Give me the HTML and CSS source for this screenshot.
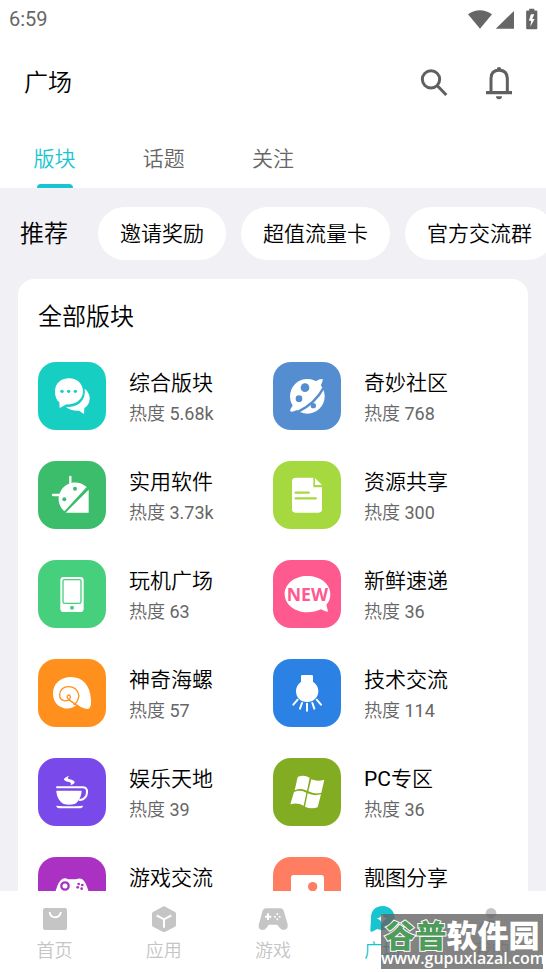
FILE: index.html
```html
<!DOCTYPE html>
<html lang="zh-CN">
<head>
<meta charset="utf-8">
<meta name="viewport" content="width=device-width, initial-scale=1">
<title>广场</title>
<link rel="stylesheet" href="styles.css">
</head>
<body>
<div class="app">
  <header class="top">
    <div class="status">
      <span>6:59</span>
      <svg class="status-icons" viewBox="173 20 207 64" aria-hidden="true">
        <path d="M173 38Q208 14 244 38L208.500 81Z"/>
        <path d="M309 28V81H255Z"/>
        <path fill-rule="evenodd" d="M345 30Q345 27 348 27H354V22H369V27H375Q378 27 378 30V79Q378 82 375 82H348Q345 82 345 79ZM359 38L353 57H360L357 75L370 52H363L369 38Z"/>
      </svg>
    </div>
    <div class="bar">
      <h1>广场</h1>
      <div class="actions">
        <button type="button" aria-label="搜索">
          <svg viewBox="24 197 96 96"><circle cx="63" cy="234" r="26" class="line"/><path d="M82 253L109 281" class="line"/></svg>
        </button>
        <button type="button" aria-label="通知">
          <svg viewBox="219 197 96 96"><path class="line" d="M243 273V231Q243 207 267 207T292 231V273"/><path d="M228 269H306V279H228ZM258 285H276Q276 294 267 294T258 285ZM260 208V204Q261 197 267 197T274 204V208Z"/></svg>
        </button>
      </div>
    </div>
    <nav class="tabs">
      <a class="active" href="#boards">版块</a>
      <a href="#topics">话题</a>
      <a href="#follow">关注</a>
    </nav>
  </header>

  <main class="content">
    <section class="recommend">
      <h2>推荐</h2>
      <a class="chip" href="#invite">邀请奖励</a>
      <a class="chip" href="#card">超值流量卡</a>
      <a class="chip" href="#group">官方交流群</a>
    </section>

    <section class="card" id="boards">
      <h2>全部版块</h2>
      <div class="grid">
        <a class="board" href="#b1">
          <svg class="tile teal" viewBox="24 22 204 204">
            <path d="M164 102C184 117 185 146 163 161L162 178L147 168C132 169 117 165 107 156C143 161 169 137 164 102Z"/>
            <path d="M117 71C142 71 159 88 159 110C159 134 138 151 110 149L89 160L88 143C79 136 75 124 75 111C75 87 92 71 117 71Z"/>
            <g class="cut"><circle cx="96" cy="110" r="5"/><circle cx="116" cy="110" r="5"/><circle cx="136" cy="110" r="5"/></g>
          </svg>
          <div class="info"><h3>综合版块</h3><p>热度 5.68k</p></div>
        </a>
        <a class="board" href="#b2">
          <svg class="tile blue" viewBox="24 22 204 204">
            <circle cx="127" cy="125" r="52"/>
            <path d="M152 80Q168 71 173 74Q175 78 164 99Q138 143 96 166Q80 174 76 170Q73 166 85 150Z"/>
            <path class="cut-line" d="M176 99Q151 146 100 171"/>
            <g class="cut"><circle cx="120" cy="99" r="13"/><circle cx="102" cy="132" r="10"/><circle cx="145" cy="153" r="8"/></g>
          </svg>
          <div class="info"><h3>奇妙社区</h3><p>热度 768</p></div>
        </a>
        <a class="board" href="#b3">
          <svg class="tile green" viewBox="24 319 204 204">
            <path d="M103 470C83 451 80 425 96 403C114 380 146 377 170 397ZM176 405V474H107Z"/>
            <path class="ink" d="M121 367V388M69 421H88"/>
            <g class="cut"><circle cx="135" cy="402" r="6"/><circle cx="103" cy="434" r="6"/></g>
          </svg>
          <div class="info"><h3>实用软件</h3><p>热度 3.73k</p></div>
        </a>
        <a class="board" href="#b4">
          <svg class="tile lime" viewBox="24 319 204 204">
            <path d="M92 369H145V398H171V464Q171 474 161 474H91Q81 474 81 464V380Q81 369 92 369ZM150 370L171 391H150Z"/>
            <path class="cut-line" d="M92 414H131M92 431H152"/>
          </svg>
          <div class="info"><h3>资源共享</h3><p>热度 300</p></div>
        </a>
        <a class="board" href="#b5">
          <svg class="tile mint" viewBox="24 30 204 204">
            <rect x="91" y="81" width="70" height="105" rx="10"/>
            <rect class="cut-line thin" x="99" y="89" width="54" height="71" rx="5"/><circle class="cut" cx="126" cy="173" r="6"/>
          </svg>
          <div class="info"><h3>玩机广场</h3><p>热度 63</p></div>
        </a>
        <a class="board" href="#b6">
          <svg class="tile pink" viewBox="24 30 204 204">
            <path d="M127 78C166 78 196 102 196 132C196 145 192 156 184 164L189 184Q187 188 168 178C155 184 143 187 127 187C88 187 59 162 59 132C59 102 88 78 127 78Z"/>
            <text class="new" x="127" y="153" text-anchor="middle">NEW</text>
          </svg>
          <div class="info"><h3>新鲜速递</h3><p>热度 36</p></div>
        </a>
        <a class="board" href="#b7">
          <svg class="tile orange" viewBox="24 327 204 204">
            <path d="M69 430C69 402 91 381 123 381C159 381 180 406 183 449Q185 475 173 477Q163 477 140 465C126 476 112 478 98 473C80 468 69 452 69 430Z"/>
            <path class="cut-line thin" d="M147 470L116 449Q107 438 115 435Q121 434 121 442C119 457 89 457 89 435C89 419 101 410 115 410C137 410 152 429 144 448Q141 459 132 464"/>
          </svg>
          <div class="info"><h3>神奇海螺</h3><p>热度 57</p></div>
        </a>
        <a class="board" href="#b8">
          <svg class="tile azure" viewBox="24 327 204 204">
            <path d="M112 375H140Q144 375 144 379V395C154 402 160 411 160 423C160 442 146 456 126 456S93 442 93 423C93 411 99 402 108 395V379Q108 375 112 375Z"/>
            <path class="ink thin" d="M98 449L85 464M111 459L105 476M126 461V482M142 459L148 476M155 449L168 464"/>
          </svg>
          <div class="info"><h3>技术交流</h3><p>热度 114</p></div>
        </a>
        <a class="board" href="#b9">
          <svg class="tile violet" viewBox="24 22 204 204">
            <path d="M79 120H155C154 140 145 154 134 160Q117 164 101 160C88 152 80 139 79 120ZM79 165Q119 169 159 165Q159 173 145 173H93Q79 173 79 165Z"/>
            <path class="ink thin" d="M81 110H155Q172 108 171 125Q170 145 150 148"/>
            <path d="M118 75Q104 80 102 85Q101 91 117 94Q126 97 121 104Q135 99 134 94Q133 89 119 86Q108 83 118 75Z"/>
          </svg>
          <div class="info"><h3>娱乐天地</h3><p>热度 39</p></div>
        </a>
        <a class="board" href="#b10">
          <svg class="tile olive" viewBox="24 22 204 204">
            <path d="M98 79Q116 71 134 81L126 120Q109 111 89 119ZM139 86Q157 94 178 87L169 126Q149 132 130 122ZM87 124Q107 116 124 126L116 165Q98 154 76 161ZM128 128Q147 137 168 131L158 170Q138 177 120 168Z"/>
          </svg>
          <div class="info"><h3>PC专区</h3><p>热度 36</p></div>
        </a>
        <a class="board" href="#b11">
          <svg class="tile purple" viewBox="24 319 204 204">
            <path d="M98 384Q107 381 114 386H138Q149 381 157 386Q169 393 181 441Q188 466 176 470Q163 473 149 447H105Q92 473 80 470Q66 466 73 436Q83 391 98 384Z"/>
            <circle class="cut-line" cx="105" cy="406" r="11"/>
            <g class="cut"><circle cx="146" cy="400" r="4"/><circle cx="157" cy="403" r="4"/><circle cx="143" cy="410" r="4"/><circle cx="155" cy="414" r="4"/></g>
          </svg>
          <div class="info"><h3>游戏交流</h3></div>
        </a>
        <a class="board" href="#b12">
          <svg class="tile coral" viewBox="24 319 204 204">
            <rect x="78" y="373" width="99" height="97" rx="8"/><circle class="cut" cx="143" cy="408" r="14"/><path class="cut" d="M87 455L108 427L126 447L141 436L166 458Z"/>
          </svg>
          <div class="info"><h3>靓图分享</h3></div>
        </a>
      </div>
    </section>
  </main>

  <nav class="bottom">
    <a href="#home">
      <svg viewBox="114 53 96 96"><rect x="126" y="68" width="72" height="66" rx="6"/><path class="hole" d="M146 80Q148 96 162 96T180 80"/></svg>
      首页
    </a>
    <a href="#apps">
      <svg viewBox="444 53 96 96"><path d="M488 64Q492 62 496 64L525 80Q528 82 528 86V119Q528 122 525 124L496 139Q492 141 488 139L459 124Q456 122 456 119V86Q456 82 459 80Z"/><path class="hole" d="M470 90L492 102L514 90M492 102V127"/></svg>
      应用
    </a>
    <a href="#games">
      <svg viewBox="771 53 96 96"><path d="M799 69H840Q849 69 852 79L863 117Q865 134 850 134Q843 134 837 125L831 118H806L800 127Q795 134 787 134Q774 132 776 119L787 79Q790 69 799 69Z"/><path class="hole" d="M795 94H814M804 84V104"/><g class="hole-dot"><circle cx="832" cy="86" r="3"/><circle cx="825" cy="94" r="3"/><circle cx="839" cy="94" r="3"/><circle cx="832" cy="102" r="3"/></g></svg>
      游戏
    </a>
    <a class="active" href="#square">
      <svg viewBox="79 53 96 96"><path d="M129 62C150 62 165 77 165 98C165 119 149 134 128 134Q120 134 113 131L97 139Q91 140 92 134L94 101C92 78 107 62 129 62Z"/><path class="hole-dot" d="M127 84Q129 98 143 100Q129 102 127 116Q125 102 111 100Q125 98 127 84Z"/></svg>
      广场
    </a>
    <a href="#me">
      <svg viewBox="406 53 96 96"><circle cx="454" cy="84" r="16"/><path d="M417 134Q420 104 454 104T491 134Q491 138 487 138H421Q417 138 417 134Z"/></svg>
      我的
    </a>
    <div class="watermark">
      <div class="mark-name"><span>谷普</span>软件园</div>
      <div class="mark-url">www.gupuxlazal.com</div>
    </div>
  </nav>
</div>
</body>
</html>
```
FILE: styles.css
```css
* {
  box-sizing: border-box;
}

body {
  margin: 0;
  background: #f1f0f5;
  color: #000;
  font-family: Roboto, "Noto Sans CJK SC DemiLight", "Noto Sans CJK SC", sans-serif;
  font-weight: 400;
}

h1, h2, h3, p {
  margin: 0;
  font-weight: inherit;
}

a {
  color: inherit;
  text-decoration: none;
}

.app {
  display: flex;
  flex-direction: column;
  height: 100vh;
  overflow: hidden;
}

.top {
  flex: none;
  background: #fff;
}

.status {
  display: flex;
  justify-content: space-between;
  align-items: center;
  height: 37px;
  padding: 0 8px 0 9px;
  color: #666;
  font-size: 20px;
}

.status-icons {
  width: 70px;
  height: 22px;
  fill: #666;
}

.bar {
  display: flex;
  justify-content: space-between;
  align-items: center;
  height: 91px;
  padding: 0 31px 0 24px;
}

h1, h2 {
  font-size: 24px;
  line-height: 38px;
}

.actions {
  display: flex;
  gap: 33px;
}

.actions button {
  width: 32px;
  height: 32px;
  padding: 0;
  border: 0;
  background: none;
}

.actions svg {
  display: block;
  overflow: visible;
  fill: #606060;
}

.line {
  fill: none;
  stroke: #606060;
  stroke-width: 9;
}

.tabs {
  display: grid;
  grid-template-columns: repeat(5, 1fr);
  height: 60px;
  color: #666;
  font-size: 21px;
  line-height: 58px;
  text-align: center;
}

.tabs a {
  padding-top: 2px;
}

.tabs .active {
  position: relative;
  color: #17c5d0;
}

.tabs .active::after {
  content: "";
  position: absolute;
  bottom: 0;
  left: calc(50% - 18px);
  width: 36px;
  height: 4px;
  border-radius: 4px 4px 0 0;
  background: #17c5d0;
}

.content {
  flex: 1;
  min-height: 0;
  overflow: hidden;
}

.recommend {
  display: flex;
  align-items: center;
  gap: 15px;
  padding: 19px 0 19px 20px;
  overflow: hidden;
}

.recommend h2 {
  flex: none;
  margin-right: 15px;
}

.chip {
  flex: none;
  padding: 1px 22px 0;
  border-radius: 27px;
  background: #fff;
  font-size: 21px;
  line-height: 52px;
}

.card {
  margin: 0 18px;
  padding: 19px 20px;
  border-radius: 16px;
  background: #fff;
}

.grid {
  display: grid;
  grid-template-columns: 1fr 1fr;
  row-gap: 31px;
  margin-top: 26px;
}

.board {
  display: flex;
  gap: 23px;
  height: 68px;
}

.tile {
  flex: none;
  width: 68px;
  height: 68px;
  border-radius: 18px;
  background: var(--tone);
  fill: #fff;
}

.teal { --tone: #17cec2; }
.blue { --tone: #548ed1; }
.green { --tone: #3cbd6c; }
.lime { --tone: #a6d83f; }
.mint { --tone: #46d07e; }
.pink { --tone: #ff5a8f; }
.orange { --tone: #ff901d; }
.azure { --tone: #2b82e4; }
.violet { --tone: #7949e9; }
.olive { --tone: #82ad22; }
.purple { --tone: #ab31c2; }
.coral { --tone: #ff7d61; }

.cut {
  fill: var(--tone);
}

.cut-line {
  fill: none;
  stroke: var(--tone);
  stroke-width: 7;
  stroke-linecap: round;
}

.ink {
  fill: none;
  stroke: #fff;
  stroke-width: 7;
  stroke-linecap: round;
}

.cut-line.thin {
  stroke-width: 4;
}

.ink.thin {
  stroke-width: 6;
}

.new {
  fill: var(--tone);
  font: 700 53px "Noto Sans", sans-serif;
}

.info {
  padding-top: 5px;
  white-space: nowrap;
}

h3 {
  font-size: 21px;
  line-height: 32px;
}

.info p {
  color: #666;
  font-size: 18px;
  line-height: 30px;
}

.bottom {
  position: relative;
  flex: none;
  display: grid;
  grid-template-columns: repeat(5, 1fr);
  height: 81px;
  background: #fff;
  color: #c5c5c5;
}

.bottom a {
  display: flex;
  flex-direction: column;
  align-items: center;
  padding-top: 12px;
  font-size: 18px;
  line-height: 32px;
}

.bottom svg {
  width: 32px;
  height: 32px;
  fill: currentColor;
}

.bottom .active {
  color: #17c5d0;
}

.hole {
  fill: none;
  stroke: #fff;
  stroke-width: 6;
}

.hole-dot {
  fill: #fff;
}

.watermark {
  position: absolute;
  right: 3px;
  bottom: 3px;
  width: 162px;
  height: 55px;
  padding-top: 5px;
  background: rgba(100, 100, 100, 0.8);
  color: #fff;
  text-align: center;
  white-space: nowrap;
}

.mark-name {
  font: 900 31px/30px "Noto Sans CJK SC", sans-serif;
}

.mark-name span {
  color: #4f9b5c;
  -webkit-text-stroke: 2px #fff;
  paint-order: stroke fill;
}

.mark-url {
  font: 600 16px/18px "Open Sans", sans-serif;
}
```
